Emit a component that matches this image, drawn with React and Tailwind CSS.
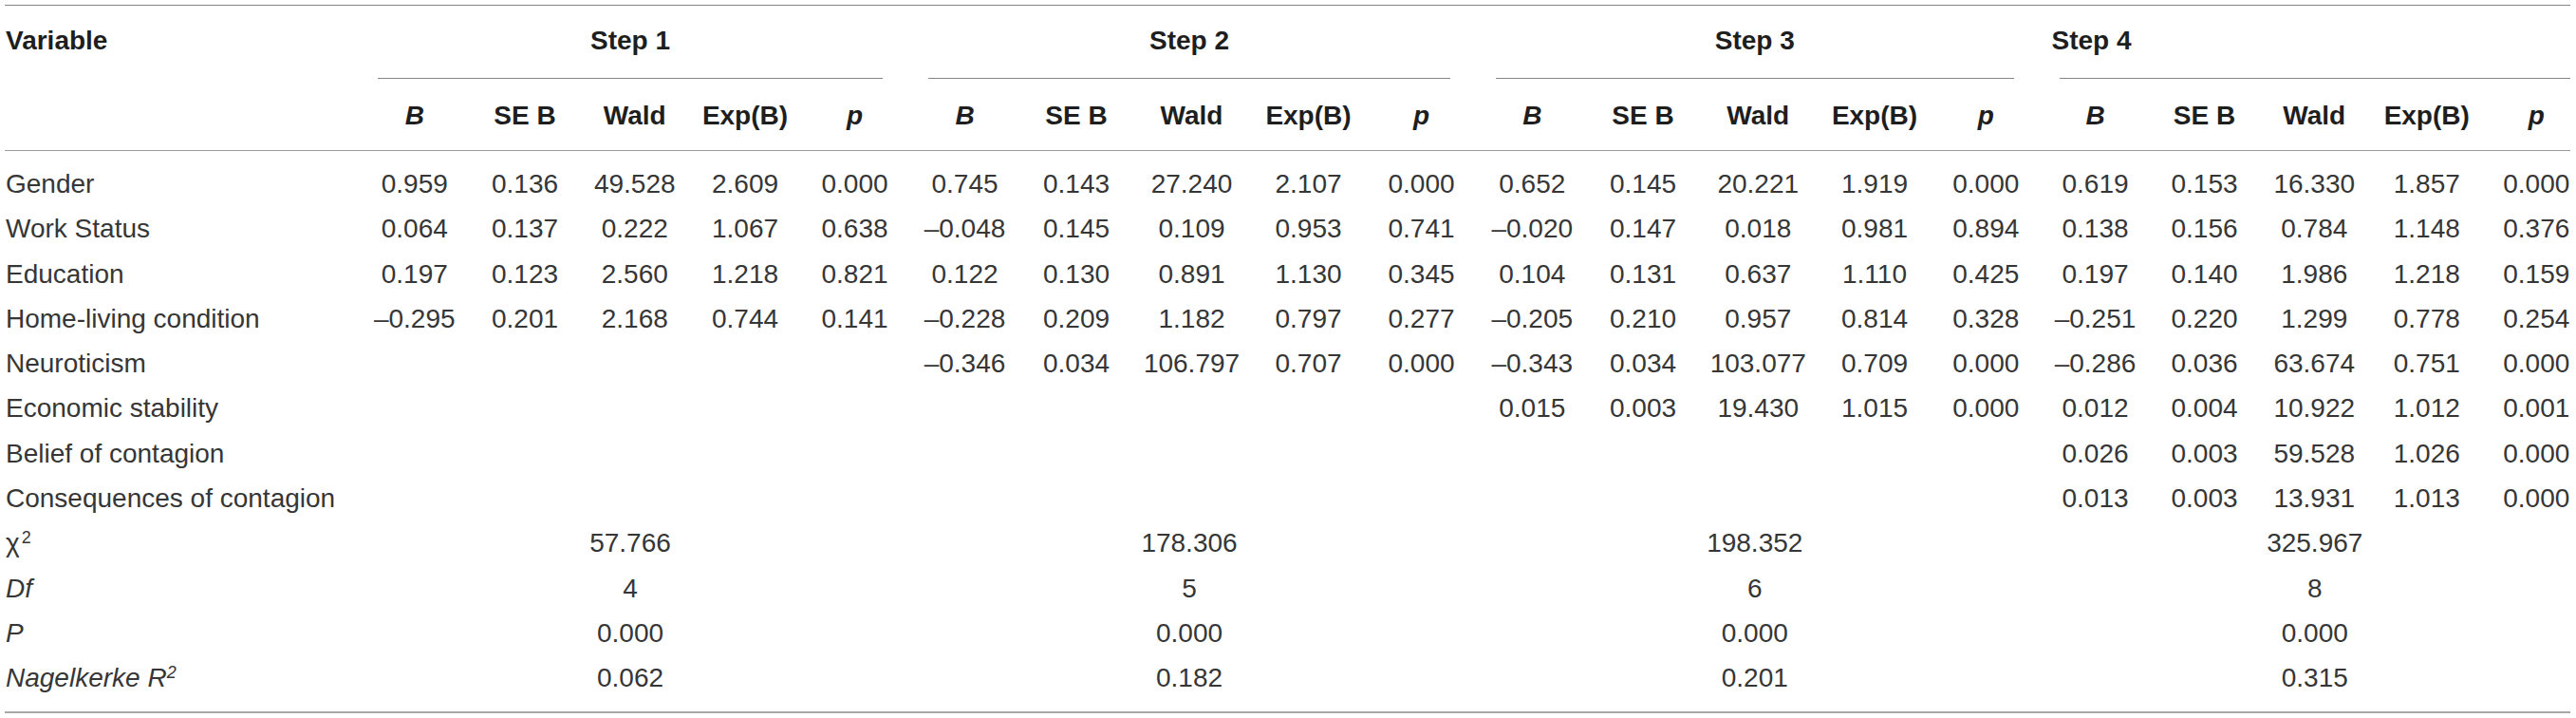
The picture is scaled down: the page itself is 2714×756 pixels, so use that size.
const rows = [
  {
    label: "Gender",
    vals: ["0.959", "0.136", "49.528", "2.609", "0.000", "0.745", "0.143", "27.240", "2.107", "0.000", "0.652", "0.145", "20.221", "1.919", "0.000", "0.619", "0.153", "16.330", "1.857", "0.000"],
  },
  {
    label: "Work Status",
    vals: ["0.064", "0.137", "0.222", "1.067", "0.638", "–0.048", "0.145", "0.109", "0.953", "0.741", "–0.020", "0.147", "0.018", "0.981", "0.894", "0.138", "0.156", "0.784", "1.148", "0.376"],
  },
  {
    label: "Education",
    vals: ["0.197", "0.123", "2.560", "1.218", "0.821", "0.122", "0.130", "0.891", "1.130", "0.345", "0.104", "0.131", "0.637", "1.110", "0.425", "0.197", "0.140", "1.986", "1.218", "0.159"],
  },
  {
    label: "Home-living condition",
    vals: ["–0.295", "0.201", "2.168", "0.744", "0.141", "–0.228", "0.209", "1.182", "0.797", "0.277", "–0.205", "0.210", "0.957", "0.814", "0.328", "–0.251", "0.220", "1.299", "0.778", "0.254"],
  },
  {
    label: "Neuroticism",
    vals: ["", "", "", "", "", "–0.346", "0.034", "106.797", "0.707", "0.000", "–0.343", "0.034", "103.077", "0.709", "0.000", "–0.286", "0.036", "63.674", "0.751", "0.000"],
  },
  {
    label: "Economic stability",
    vals: ["", "", "", "", "", "", "", "", "", "", "0.015", "0.003", "19.430", "1.015", "0.000", "0.012", "0.004", "10.922", "1.012", "0.001"],
  },
  {
    label: "Belief of contagion",
    vals: ["", "", "", "", "", "", "", "", "", "", "", "", "", "", "", "0.026", "0.003", "59.528", "1.026", "0.000"],
  },
  {
    label: "Consequences of contagion",
    vals: ["", "", "", "", "", "", "", "", "", "", "", "", "", "", "", "0.013", "0.003", "13.931", "1.013", "0.000"],
  },
  {
    label: (
      <>
        χ<sup className="text-[18px] ml-[2px]">2</sup>
      </>
    ),
    summary: ["57.766", "178.306", "198.352", "325.967"],
  },
  { label: <span className="italic">Df</span>, summary: ["4", "5", "6", "8"] },
  { label: <span className="italic">P</span>, summary: ["0.000", "0.000", "0.000", "0.000"] },
  {
    label: (
      <span className="italic">
        Nagelkerke R<sup className="text-[18px]">2</sup>
      </span>
    ),
    summary: ["0.062", "0.182", "0.201", "0.315"],
  },
];

const subHeads = ["B", "SE B", "Wald", "Exp(B)", "p"];

function SubHead({ text, last }) {
  const italic = text === "B" || text === "p";
  return (
    <th
      className={
        "pt-[23px] pb-[20px] leading-[32px] text-center font-bold border-b border-[#9a9a9a] " +
        (italic ? "italic " : "") +
        (last ? "pl-[20px]" : "")
      }
    >
      {text}
    </th>
  );
}

export default function App() {
  return (
    <div className="min-h-screen bg-white pt-[5px] pl-[5px] font-['Liberation_Sans',Arial,sans-serif] text-[28px] text-[#363636]">
      <div className="w-[2703px] border-t border-[#858585] border-b-2 border-b-[#a8a8a8]">
        <table className="w-[2703px] table-fixed border-collapse">
          <colgroup>
            <col className="w-[373px]" />
            <col className="w-[117.5px]" />
            <col className="w-[115px]" />
            <col className="w-[116.5px]" />
            <col className="w-[116px]" />
            <col className="w-[115px]" />
            <col className="w-[117px]" />
            <col className="w-[118px]" />
            <col className="w-[125px]" />
            <col className="w-[121px]" />
            <col className="w-[117px]" />
            <col className="w-[116.5px]" />
            <col className="w-[117px]" />
            <col className="w-[125.5px]" />
            <col className="w-[120px]" />
            <col className="w-[114.5px]" />
            <col className="w-[116px]" />
            <col className="w-[114px]" />
            <col className="w-[117.5px]" />
            <col className="w-[119.5px]" />
            <col className="w-[91.5px]" />
          </colgroup>
          <thead className="text-[#1e1e1e]">
            <tr>
              <th className="align-top pt-[21px] pl-[1px] text-left font-bold leading-[32px]">Variable</th>
              {["Step 1", "Step 2", "Step 3"].map((s) => (
                <th key={s} colSpan={5} className="align-top pt-[21px] font-bold">
                  <div className="leading-[32px] text-center ml-[20px] mr-[28px]">{s}</div>
                  <div className="mt-[23px] h-px bg-[#858585] ml-[20px] mr-[28px]" />
                </th>
              ))}
              <th colSpan={5} className="align-top pt-[21px] font-bold">
                <div className="leading-[32px] text-left pl-[12px]">Step 4</div>
                <div className="mt-[23px] h-px bg-[#858585] ml-[20px]" />
              </th>
            </tr>
            <tr>
              <th className="border-b border-[#9a9a9a]" />
              {[0, 1, 2, 3].flatMap((g) =>
                subHeads.map((h, i) => (
                  <SubHead key={g + "-" + i} text={h} last={g === 3 && i === 4} />
                ))
              )}
            </tr>
          </thead>
          <tbody>
            {rows.map((r, ri) => {
              const pad =
                ri === 0 ? "pt-[11px] " : ri === rows.length - 1 ? "pb-[11px] " : "";
              return (
                <tr key={ri}>
                  <td className={pad + "pl-[1px] text-left leading-[47.3px] whitespace-nowrap"}>
                    {r.label}
                  </td>
                  {r.summary
                    ? r.summary.map((v, gi) => (
                        <td
                          key={gi}
                          colSpan={5}
                          className={
                            pad +
                            "text-center leading-[47.3px] " +
                            (gi === 3 ? "pl-[20px]" : "pl-[20px] pr-[28px]")
                          }
                        >
                          {v}
                        </td>
                      ))
                    : r.vals.map((v, vi) => (
                        <td
                          key={vi}
                          className={
                            pad +
                            "text-center leading-[47.3px] whitespace-nowrap " +
                            (vi === 19 ? "pl-[20px]" : "")
                          }
                        >
                          {v}
                        </td>
                      ))}
                </tr>
              );
            })}
          </tbody>
        </table>
      </div>
    </div>
  );
}
